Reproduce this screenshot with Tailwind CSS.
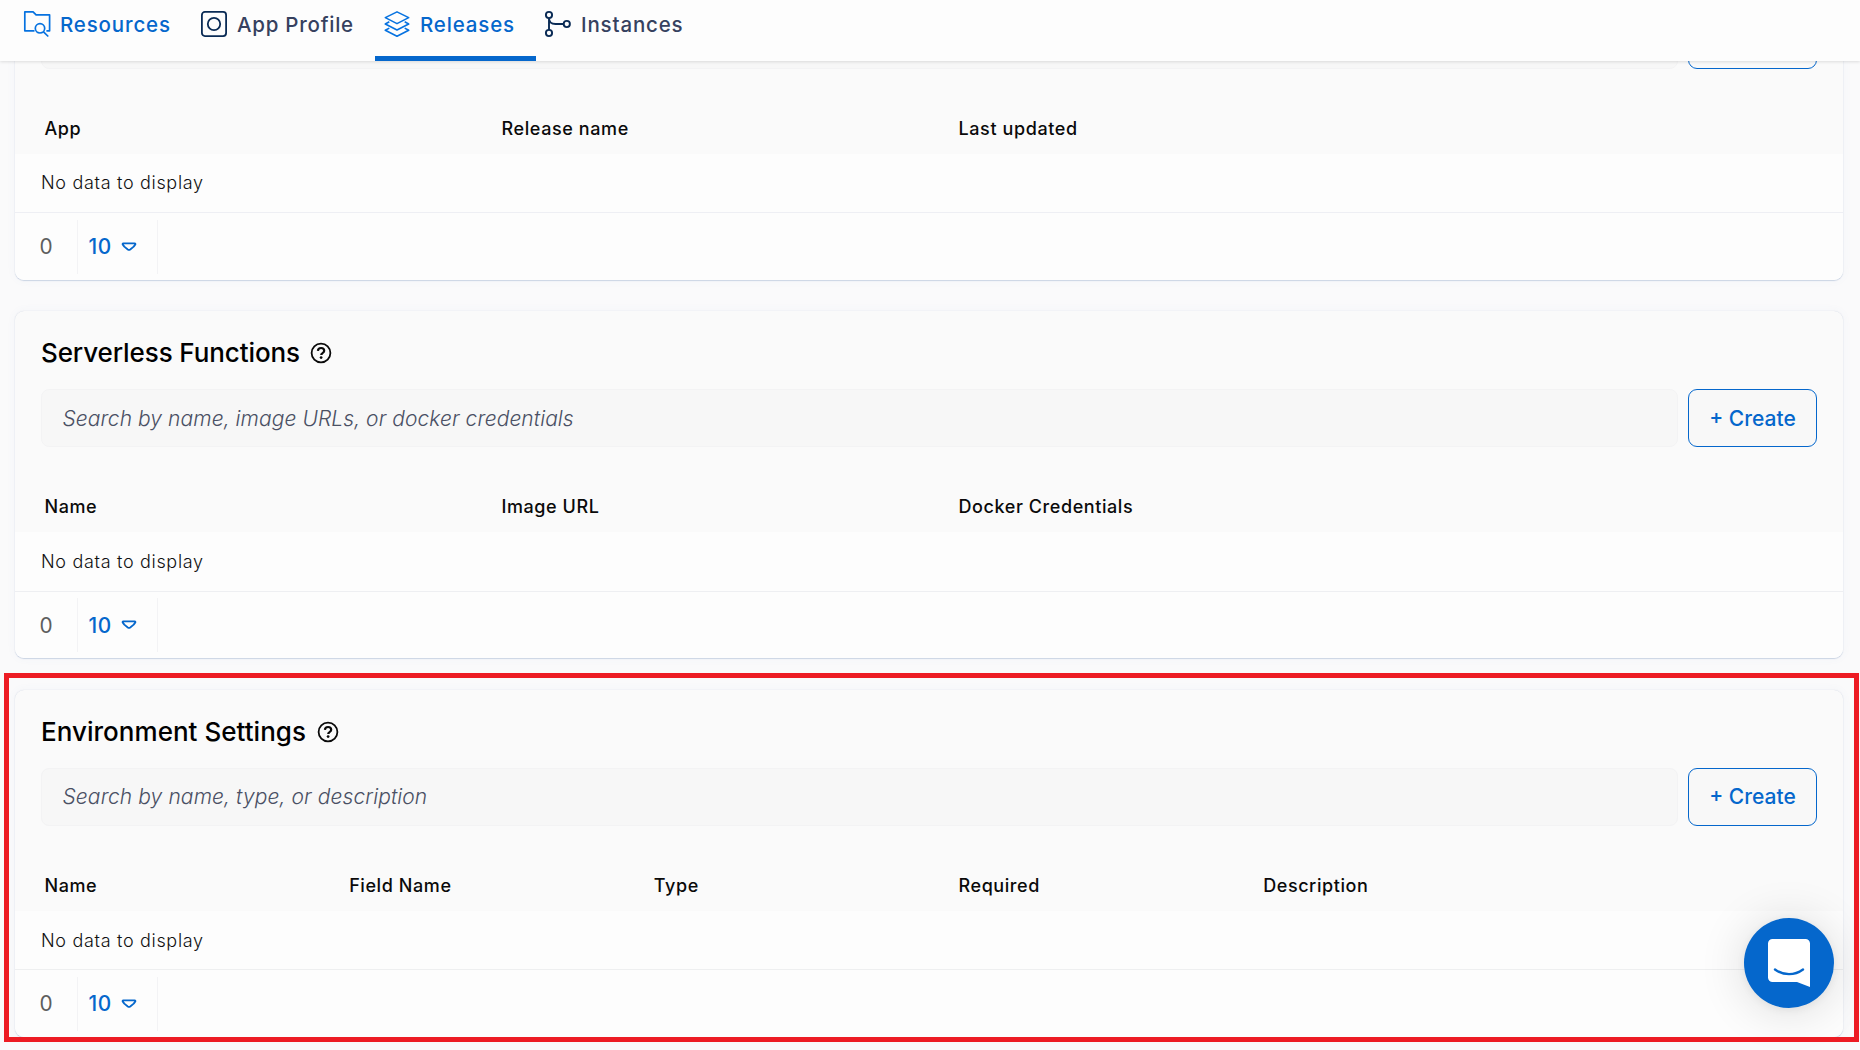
<!DOCTYPE html>
<html lang="en">
<head>
<meta charset="utf-8">
<title>Releases</title>
<script src="https://cdn.jsdelivr.net/npm/@tailwindcss/browser@4"></script>
</head>
<body class="relative h-[1050px] w-[1860px] overflow-hidden bg-[#fafafb] font-['Inter',sans-serif] text-black">
<svg class="hidden">
  <symbol id="help" viewBox="0 0 22 22" fill="none" stroke="#0a0a0a"><circle cx="11" cy="11" r="9.4" stroke-width="1.8"/><path d="M7.9 8.9C8 7 9.4 6 11.1 6c1.800 0 3.100 1.100 3.100 2.700 0 1.300-.8 1.900-1.700 2.500-.9.500-1.300.9-1.300 1.900" stroke-width="2.200"/><circle cx="11.100" cy="15.600" r="1.400" fill="#0a0a0a" stroke="none"/></symbol>
  <symbol id="caret" viewBox="0 0 16 10"><path d="M2.300 1.400h11.400c.7 0 1 .7.500 1.200l-1.500 2L9.200 7.500c-.8.600-1.600.6-2.400 0L3.300 4.600l-1.500-2c-.5-.5-.2-1.200.5-1.200z" fill="none" stroke="#0567cc" stroke-width="1.800" stroke-linejoin="round"/></symbol>
</svg>

<div class="flex h-full flex-col">
  <header class="relative z-10 flex h-[61px] shrink-0 bg-[#fdfdfd] pl-[15px] text-[20.5px] font-medium tracking-[0.84px] text-[#36415f] shadow-[0_1px_3px_rgba(0,0,0,0.12)]">
    <a class="flex h-[61px] w-[177px] items-start pl-2 text-[#0567cc]">
      <svg class="mt-[10px] mr-[9px] h-7 w-7 shrink-0" viewBox="0 0 28 28" fill="none" stroke="#0672e0" stroke-width="1.700" stroke-linejoin="round"><path d="M11.500 20.800H1.800V1.900h8.300l3 3h13.500v15.900h-3.200"/><circle cx="17" cy="18.300" r="4.700"/><path d="M20.500 21.800l4.800 4.700"/></svg>
      <span class="leading-[50px]">Resources</span>
    </a>
    <a class="flex h-[61px] w-[183px] items-start pl-2">
      <svg class="mt-[10px] mr-[9px] h-7 w-7 shrink-0" viewBox="0 0 28 28" fill="none" stroke="#0a2b55" stroke-width="1.800"><rect x="1.900" y="1.900" width="24.200" height="24.200" rx="3"/><circle cx="14" cy="14" r="6.200"/></svg>
      <span class="leading-[50px] tracking-[0.75px]">App Profile</span>
    </a>
    <a class="flex h-[61px] w-[161px] items-start border-b-5 border-[#0567cc] pl-2 text-[#0567cc]">
      <svg class="mt-[10px] mr-[9px] h-7 w-7 shrink-0" viewBox="0 0 28 28" fill="none" stroke="#0672e0" stroke-width="1.600" stroke-linejoin="round"><path d="M14 1.900l11.700 5.700L14 13.600 2.300 7.600z"/><path d="M6.300 11.800l-4 2.200L14 20l11.700-6-4-2.200"/><path d="M6.300 18.100l-4 2.200L14 26.200l11.700-5.900-4-2.200"/></svg>
      <span class="leading-[50px]">Releases</span>
    </a>
    <a class="flex h-[61px] items-start pl-2">
      <svg class="mt-[10px] mr-[9px] h-7 w-7 shrink-0" viewBox="0 0 28 28" fill="none" stroke="#0a2b55" stroke-width="1.900"><circle cx="5" cy="5" r="3.100"/><circle cx="5" cy="23" r="3.100"/><circle cx="22.800" cy="14" r="3.100"/><path d="M5 8.200v11.600M5 8.200c0 4.500 2.500 5.800 6.500 5.800h8"/></svg>
      <span class="leading-[50px]">Instances</span>
    </a>
  </header>

  <main class="min-h-0 flex-1 overflow-hidden pl-[15px]">
    <section class="-mt-32 mb-[31px] flex h-[347px] w-[1828px] flex-col overflow-hidden rounded-[9px] bg-[#fafafa] shadow-[0_1px_1px_#cbd5e4,0_0_10px_rgba(80,110,180,0.05),0_0_1px_rgba(90,110,150,0.25)]">
      <div class="h-[78px] shrink-0"></div>
      <div class="flex h-[58px] shrink-0 gap-[10px] px-[26px]">
        <div class="flex-1 rounded-lg border border-[#f3f3f4] bg-[#f7f7f7]"></div>
        <div class="w-[129px] rounded-[9px] border border-[#0567cc] bg-[#f9f9f9]"></div>
      </div>
      <div class="mt-[34px] grid h-[51px] shrink-0 grid-cols-4 items-center text-[18px] font-medium tracking-[0.6px] text-[#0a0a0a] *:pl-[29.5px]">
        <span>App</span><span>Release name</span><span>Last updated</span>
      </div>
      <div class="flex h-[58px] shrink-0 items-center bg-[#fdfdfd] pb-px pl-[26px] text-[18px] font-light tracking-[0.68px] text-[#111]">No data to display</div>
      <div class="flex flex-1 items-center border-t border-[#eeeff4] bg-[#fdfdfd] text-[20.8px]">
        <div class="w-[61.500px] pl-[24.500px] text-[#5e5e5e]">0</div>
        <div class="flex h-[54px] w-[81px] items-center border-x border-[#f3f3f5] pl-[11px] font-medium tracking-[0.6px] text-[#0567cc]">10<svg class="ml-[9.500px] h-[10px] w-4"><use href="#caret"/></svg></div>
      </div>
    </section>

    <section class="mb-8 flex h-[347px] w-[1828px] flex-col overflow-hidden rounded-[9px] bg-[#fafafa] shadow-[0_1px_1px_#cbd5e4,0_0_10px_rgba(80,110,180,0.05),0_0_1px_rgba(90,110,150,0.25)]">
      <div class="mt-[22px] flex h-[39px] shrink-0 items-center pl-[26px]">
        <h2 class="text-[26px] leading-[39px] font-medium tracking-[-0.1px]">Serverless Functions</h2>
        <svg class="ml-[10px] h-[22px] w-[22px]"><use href="#help"/></svg>
      </div>
      <div class="mt-[17px] flex h-[58px] shrink-0 gap-[10px] px-[26px]">
        <div class="flex flex-1 items-center rounded-lg border border-[#f3f3f4] bg-[#f7f7f7] pt-[2px] pl-[20.500px] text-[21px] font-light tracking-[0.07px] text-[#4a5064] italic">Search by name, image URLs, or docker credentials</div>
        <button class="w-[129px] rounded-[9px] border border-[#0567cc] bg-[#f8f8f8] pt-[2px] text-[21px] font-medium text-[#0567cc]">+ Create</button>
      </div>
      <div class="mt-[34px] grid h-[51px] shrink-0 grid-cols-4 items-center text-[18px] font-medium tracking-[0.58px] text-[#0a0a0a] *:pl-[29.5px]">
        <span>Name</span><span>Image URL</span><span>Docker Credentials</span>
      </div>
      <div class="flex h-[59px] shrink-0 items-center bg-[#fdfdfd] pl-[26px] text-[18px] font-light tracking-[0.68px] text-[#111]">No data to display</div>
      <div class="flex flex-1 items-center border-t border-[#eeeff2] bg-[#fdfdfd] text-[20.8px]">
        <div class="w-[61.500px] pt-px pl-[24.500px] text-[#5e5e5e]">0</div>
        <div class="flex h-[54px] w-[81px] items-center border-x border-[#f3f3f5] pt-px pl-[11px] font-medium tracking-[0.6px] text-[#0567cc]">10<svg class="-mt-px ml-[9.500px] h-[10px] w-4"><use href="#caret"/></svg></div>
      </div>
    </section>

    <section class="flex h-[347px] w-[1828px] flex-col overflow-hidden rounded-[9px] bg-[#fafafa] shadow-[0_1px_1px_#cbd5e4,0_0_10px_rgba(80,110,180,0.05),0_0_1px_rgba(90,110,150,0.25)]">
      <div class="mt-[22px] flex h-[39px] shrink-0 items-center pl-[26px]">
        <h2 class="text-[26px] leading-[39px] font-medium tracking-[0.03px]">Environment Settings</h2>
        <svg class="ml-[10.500px] h-[22px] w-[22px]"><use href="#help"/></svg>
      </div>
      <div class="mt-[17px] flex h-[58px] shrink-0 gap-[10px] px-[26px]">
        <div class="flex flex-1 items-center rounded-lg border border-[#f3f3f4] bg-[#f7f7f7] pl-[20.500px] text-[21px] font-light tracking-[0.1px] text-[#4a5064] italic">Search by name, type, or description</div>
        <button class="w-[129px] rounded-[9px] border border-[#0567cc] bg-[#f8f8f8] text-[21px] font-medium text-[#0567cc]">+ Create</button>
      </div>
      <div class="mt-[34px] grid h-[51px] shrink-0 grid-cols-6 items-center text-[18px] font-medium tracking-[0.58px] text-[#0a0a0a] *:pl-[29.5px]">
        <span>Name</span><span>Field Name</span><span>Type</span><span>Required</span><span>Description</span>
      </div>
      <div class="flex h-[58px] shrink-0 items-center bg-[#fdfdfd] pl-[26px] text-[18px] font-light tracking-[0.68px] text-[#111]">No data to display</div>
      <div class="flex flex-1 items-center border-t border-[#eeeff0] bg-[#fdfdfd] text-[20.8px]">
        <div class="w-[61.500px] pl-[24.500px] text-[#5e5e5e]">0</div>
        <div class="flex h-[54px] w-[81px] items-center border-x border-[#f3f3f5] pl-[11px] font-medium tracking-[0.6px] text-[#0567cc]">10<svg class="ml-[9.500px] h-[10px] w-4"><use href="#caret"/></svg></div>
      </div>
    </section>
  </main>
</div>

<!-- chat launcher -->
<div class="absolute top-[918px] left-[1744px] h-[90px] w-[90px] rounded-full bg-[#0567cc] shadow-[0_2px_9px_rgba(0,0,0,0.06),0_3px_48px_rgba(0,0,0,0.14)]">
  <svg class="h-[90px] w-[90px]" viewBox="0 0 90 90"><path d="M28.500 21h33a4.500 4.500 0 0 1 4.500 4.500V69l-13-5H28.500a4.500 4.500 0 0 1-4.500-4.500v-34A4.500 4.500 0 0 1 28.500 21z" fill="#fff"/><path d="M31 51.500c8.500 6.200 19.500 6.200 28 0" fill="none" stroke="#0567cc" stroke-width="2.400" stroke-linecap="round"/></svg>
</div>
<!-- highlight frame -->
<div class="pointer-events-none absolute top-[673px] left-1 h-[369px] w-[1855px] border-5 border-[#ed1c24]"></div>
</body>
</html>
